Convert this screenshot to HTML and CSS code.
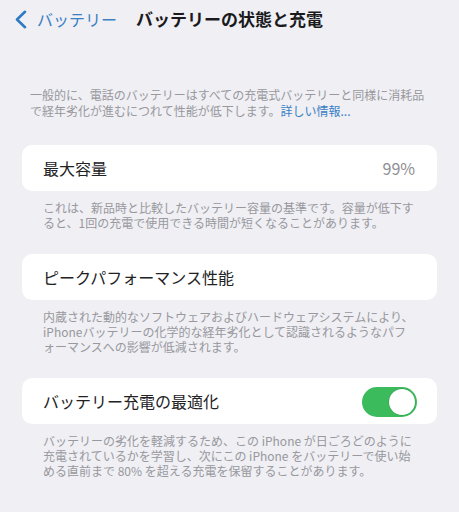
FILE: index.html
```html
<!DOCTYPE html>
<html lang="ja">
<head>
<meta charset="utf-8">
<link rel="stylesheet" href="styles.css">
</head>
<body>
<div class="page">
  <header class="nav">
    <a class="back">
      <svg class="chev" width="13" height="19" viewBox="0 0 13 19"><path d="M11 1.8 L3 9.5 L11 17.2" fill="none" stroke="#2f7bc3" stroke-width="2.6" stroke-linecap="round" stroke-linejoin="round"/></svg>
      <span class="back-text">バッテリー</span>
    </a>
    <h1 class="title">バッテリーの状態と充電</h1>
  </header>

  <p class="intro">一般的に、電話のバッテリーはすべての充電式バッテリーと同様に消耗品で経年劣化が進むにつれて性能が低下します。<span class="link">詳しい情報...</span></p>

  <section class="group">
    <div class="cell">
      <span class="label">最大容量</span>
      <span class="value">99%</span>
    </div>
    <p class="caption">これは、新品時と比較したバッテリー容量の基準です。容量が低下すると、1回の充電で使用できる時間が短くなることがあります。</p>
  </section>

  <section class="group">
    <div class="cell">
      <span class="label">ピークパフォーマンス性能</span>
    </div>
    <p class="caption caption-narrow">内蔵された動的なソフトウェアおよびハードウェアシステムにより、iPhoneバッテリーの化学的な経年劣化として認識されるようなパフォーマンスへの影響が低減されます。</p>
  </section>

  <section class="group">
    <div class="cell cell-toggle">
      <span class="label">バッテリー充電の最適化</span>
      <span class="toggle"><span class="knob"></span></span>
    </div>
    <p class="caption">バッテリーの劣化を軽減するため、この iPhone が日ごろどのように充電されているかを学習し、次にこの iPhone をバッテリーで使い始める直前まで 80% を超える充電を保留することがあります。</p>
  </section>
</div>
</body>
</html>
```

FILE: styles.css
```css
html, body {
  margin: 0;
  padding: 0;
  background: #efeff4;
}
body {
  font-family: "Noto Sans CJK JP", "Noto Sans", sans-serif;
  color: #222224;
  width: 459px;
  height: 512px;
  overflow: hidden;
}
.page {
  display: flex;
  flex-direction: column;
}
.nav {
  display: flex;
  align-items: center;
  height: 38px;
  padding-left: 14px;
}
.back {
  display: flex;
  align-items: center;
  gap: 10px;
  color: #3a80c4;
  font-size: 16px;
}
.chev {
  display: block;
}
.back-text {
  line-height: 20px;
}
.title {
  margin: 0 0 0 19px;
  font-size: 17px;
  font-weight: 700;
  line-height: 20px;
  color: #1a1a1c;
}
.intro {
  margin: 49px 0 0 0;
  padding: 0 29px 0 30px;
  font-size: 12px;
  line-height: 16px;
  color: #98989d;
}
.link {
  color: #3a80c4;
}
.group {
  margin-top: 26px;
  display: flex;
  flex-direction: column;
}
.group + .group {
  margin-top: 24px;
}
.cell {
  margin: 0 22px;
  height: 46px;
  background: #ffffff;
  border-radius: 10px;
  display: flex;
  align-items: center;
  justify-content: space-between;
  padding: 0 22px 0 21px;
}
.cell-toggle {
  padding-right: 20px;
}
.label {
  font-size: 16px;
  line-height: 20px;
}
.value {
  font-size: 16px;
  color: #8e8e93;
}
.toggle {
  position: relative;
  width: 55px;
  height: 30px;
  border-radius: 15px;
  background: #3bbb5c;
  margin-top: 2px;
}
.knob {
  position: absolute;
  right: 2px;
  top: 2px;
  width: 26px;
  height: 26px;
  border-radius: 50%;
  background: #ffffff;
  box-shadow: 0 0 0 0.5px rgba(40, 120, 60, 0.5);
}
.caption {
  margin: 9px 0 0 0;
  padding: 0 40px 0 43px;
  font-size: 12px;
  line-height: 15px;
  color: #98989d;
}
.caption-narrow {
  padding-right: 43.5px;
}
```
